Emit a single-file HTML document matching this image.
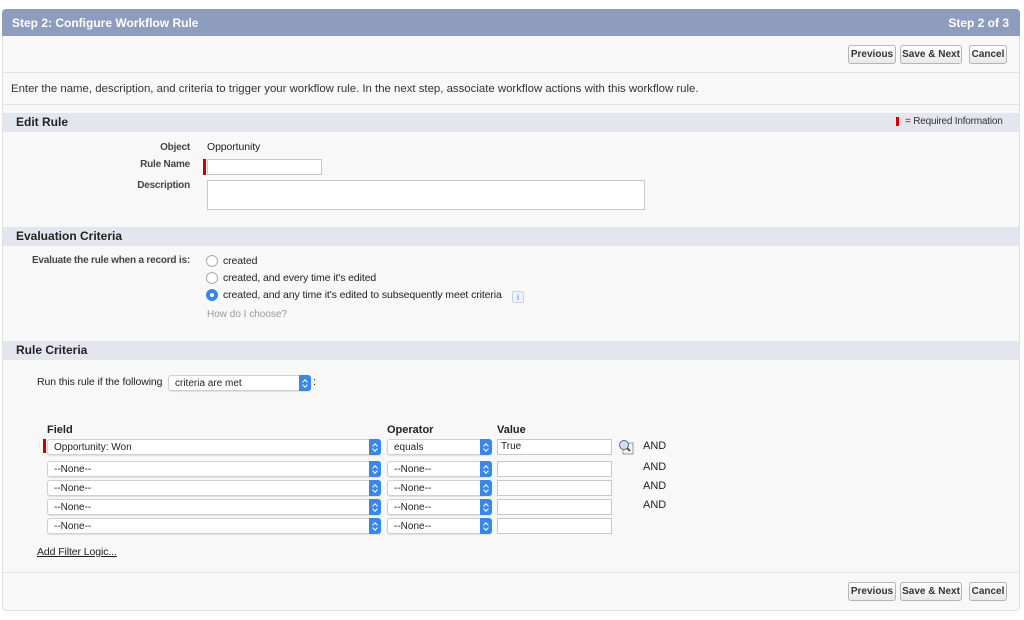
<!DOCTYPE html>
<html><head><style>
*{box-sizing:border-box;margin:0;padding:0}
body{width:1024px;height:620px;background:#fff;font-family:"Liberation Sans",Arial,sans-serif;font-size:11px;color:#222;position:relative;overflow:hidden}
.a{position:absolute}
.box{left:2px;top:9px;width:1018px;height:602px;background:#f8f8f8;border:1px solid #e0e0e0;border-radius:4px;overflow:hidden}
.hdr{left:2px;top:9px;width:1018px;height:27px;background:#8e9dbe;border-radius:4px 4px 0 0;color:#fff;font-weight:bold;font-size:12px}
.btn{height:19px;border:1px solid #b5b5b5;border-radius:3px;background:linear-gradient(#fff,#e8e8e8);font-weight:bold;font-size:10px;color:#333;text-align:center;line-height:17px}
.sec{left:3px;width:1016px;height:19px;background:#e3e6ee;font-weight:bold;font-size:12px;line-height:19px;padding-left:13px}
.hl{left:3px;width:1016px;height:1px;background:#e3e3e3}
.lbl{font-weight:bold;font-size:10px;color:#444;text-align:right;letter-spacing:-0.2px}
.inp{background:#fff;border:1px solid #c8c8c8}
.sel{background:#fff;border:1px solid #d0d0d0;border-radius:3px;height:16px;font-size:10px;line-height:15px;padding-left:6px;box-shadow:0 1px 1px rgba(0,0,0,.1)}
.sel i{position:absolute;right:-1px;top:-1px;width:12px;height:16px;background:#3b87e8;border-radius:0 3px 3px 0}
.sel i:before,.sel i:after{content:"";position:absolute;left:3px;width:3px;height:3px;border-left:1px solid #fff;border-top:1px solid #fff}
.sel i:before{top:5px;transform:rotate(45deg);left:4px}
.sel i:after{top:8px;transform:rotate(-135deg);left:4px}
.radio{width:12px;height:12px;border:1px solid #aaa;border-radius:50%;background:#fff}
.and{font-size:11px;color:#222}
.rt{font-size:10.5px;letter-spacing:-0.1px}
</style></head><body>
<div class="a box"></div>
<div class="a hdr"><span class="a" style="left:10px;top:7px">Step 2: Configure Workflow Rule</span><span class="a" style="right:11px;top:7px">Step 2 of 3</span></div>
<div class="a btn" style="left:848px;top:45px;width:48px">Previous</div>
<div class="a btn" style="left:900px;top:45px;width:62px">Save &amp; Next</div>
<div class="a btn" style="left:969px;top:45px;width:38px">Cancel</div>
<div class="a hl" style="top:72px"></div>
<div class="a" style="left:11px;top:83px;font-size:11.4px;color:#333">Enter the name, description, and criteria to trigger your workflow rule. In the next step, associate workflow actions with this workflow rule.</div>
<div class="a hl" style="top:104px"></div>
<div class="a sec" style="top:113px">Edit Rule</div>
<div class="a" style="left:896px;top:117px;width:3px;height:9px;background:#c00"></div>
<div class="a" style="left:905px;top:116px;font-size:10px;color:#333;letter-spacing:-0.2px">= Required Information</div>
<div class="a lbl" style="left:100px;top:142px;width:90px">Object</div>
<div class="a rt" style="left:207px;top:141px">Opportunity</div>
<div class="a lbl" style="left:100px;top:159px;width:90px">Rule Name</div>
<div class="a" style="left:203px;top:159px;width:3px;height:16px;background:#c00"></div>
<div class="a inp" style="left:207px;top:159px;width:115px;height:16px"></div>
<div class="a lbl" style="left:100px;top:180px;width:90px">Description</div>
<div class="a inp" style="left:207px;top:180px;width:438px;height:30px"></div>
<div class="a sec" style="top:227px">Evaluation Criteria</div>
<div class="a lbl" style="left:20px;top:255px;width:170px">Evaluate the rule when a record is:</div>
<div class="a radio" style="left:206px;top:255px"></div><div class="a rt" style="left:223px;top:255px">created</div>
<div class="a radio" style="left:206px;top:272px"></div><div class="a rt" style="left:223px;top:272px">created, and every time it's edited</div>
<div class="a radio" style="left:206px;top:289px;background:#3b87e8;border-color:#3b87e8"><div class="a" style="left:3px;top:3px;width:4px;height:4px;border-radius:50%;background:#fff"></div></div><div class="a rt" style="left:223px;top:289px">created, and any time it's edited to subsequently meet criteria</div>
<div class="a" style="left:512px;top:291px;width:12px;height:12px;border:1px solid #c8d4e4;border-radius:2px;background:#eef3fa;font-size:8px;color:#36c;text-align:center;line-height:11px">i</div>
<div class="a" style="left:207px;top:309px;font-size:10px;color:#999">How do I choose?</div>
<div class="a sec" style="top:341px">Rule Criteria</div>
<div class="a rt" style="left:37px;top:376px">Run this rule if the following</div>
<div class="a sel" style="left:168px;top:375px;width:143px">criteria are met<i></i></div>
<div class="a" style="left:313px;top:376px">:</div>
<div class="a" style="left:47px;top:424px;font-weight:bold">Field</div>
<div class="a" style="left:387px;top:424px;font-weight:bold">Operator</div>
<div class="a" style="left:497px;top:424px;font-weight:bold">Value</div>
<div class="a" style="left:43px;top:439px;width:3px;height:14px;background:#c00"></div>
<div class="a sel" style="left:47px;top:439px;width:334px">Opportunity: Won<i></i></div>
<div class="a sel" style="left:387px;top:439px;width:105px">equals<i></i></div>
<div class="a inp" style="left:497px;top:439px;width:115px;height:16px;font-size:10px;padding-left:3px;line-height:14px">True</div>
<svg class="a" style="left:618px;top:439px" width="16" height="16" viewBox="0 0 16 16"><rect x="5" y="4" width="10" height="11" fill="#f4f4f4" stroke="#999"/><circle cx="6" cy="6" r="4.5" fill="#cfe0f2" stroke="#666"/><line x1="9" y1="9" x2="12" y2="12" stroke="#555" stroke-width="2"/></svg>
<div class="a and" style="left:643px;top:440px">AND</div>
<div class="a sel" style="left:47px;top:461px;width:334px">--None--<i></i></div><div class="a sel" style="left:387px;top:461px;width:105px">--None--<i></i></div><div class="a inp" style="left:497px;top:461px;width:115px;height:16px"></div><div class="a and" style="left:643px;top:461px">AND</div>
<div class="a sel" style="left:47px;top:480px;width:334px">--None--<i></i></div><div class="a sel" style="left:387px;top:480px;width:105px">--None--<i></i></div><div class="a inp" style="left:497px;top:480px;width:115px;height:16px"></div><div class="a and" style="left:643px;top:480px">AND</div>
<div class="a sel" style="left:47px;top:499px;width:334px">--None--<i></i></div><div class="a sel" style="left:387px;top:499px;width:105px">--None--<i></i></div><div class="a inp" style="left:497px;top:499px;width:115px;height:16px"></div><div class="a and" style="left:643px;top:499px">AND</div>
<div class="a sel" style="left:47px;top:518px;width:334px">--None--<i></i></div><div class="a sel" style="left:387px;top:518px;width:105px">--None--<i></i></div><div class="a inp" style="left:497px;top:518px;width:115px;height:16px"></div>
<div class="a rt" style="left:37px;top:546px;text-decoration:underline">Add Filter Logic...</div>
<div class="a hl" style="top:572px"></div>
<div class="a btn" style="left:848px;top:582px;width:48px">Previous</div>
<div class="a btn" style="left:900px;top:582px;width:62px">Save &amp; Next</div>
<div class="a btn" style="left:969px;top:582px;width:38px">Cancel</div>
</body></html>
